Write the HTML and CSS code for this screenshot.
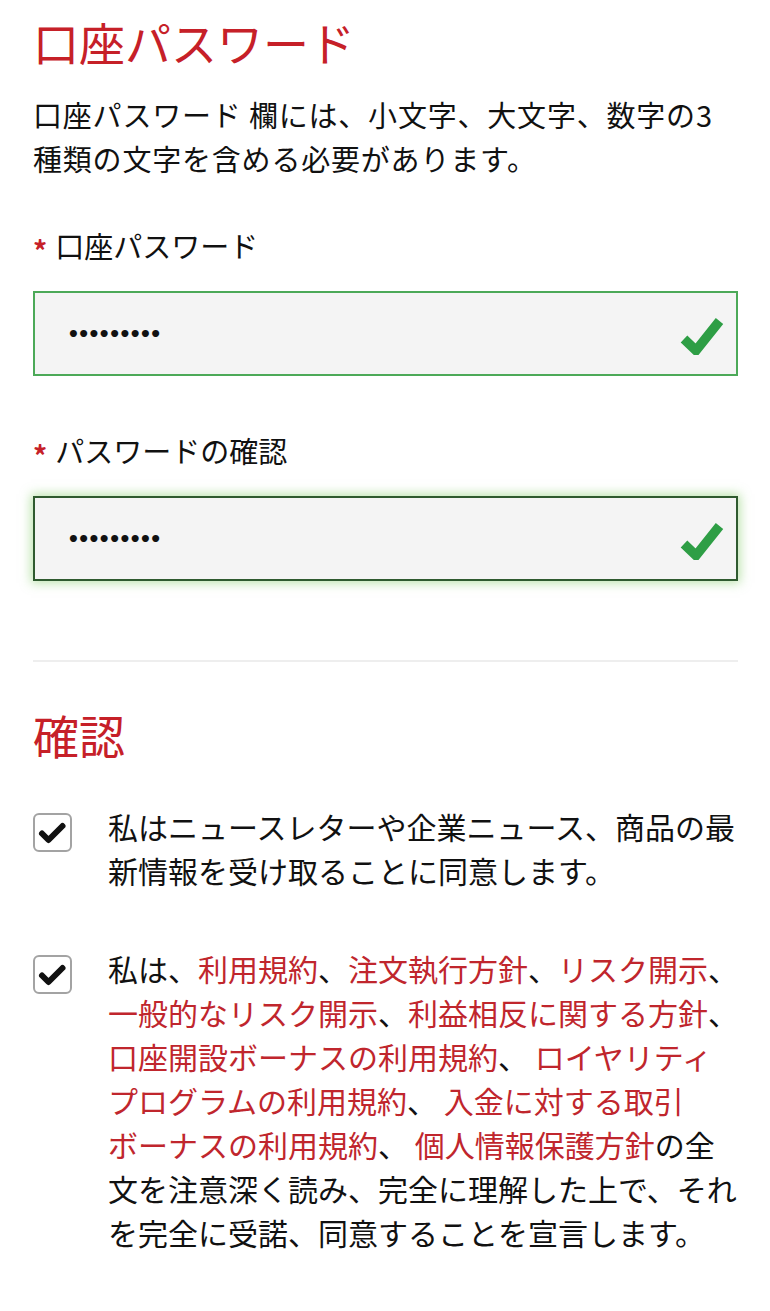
FILE: index.html
```html
<!DOCTYPE html>
<html lang="ja">
<head>
<meta charset="utf-8">
<title>口座パスワード</title>
<link rel="stylesheet" href="styles.css">
</head>
<body>
<main class="page">
  <h1 class="title">口座パスワード</h1>
  <p class="hint">口座パスワード 欄には、小文字、大文字、数字の3<br>種類の文字を含める必要があります。</p>

  <div class="field field-first">
    <div class="label"><span class="req">*</span><span>口座パスワード</span></div>
    <div class="input valid">
      <span class="mask">•••••••••</span>
      <svg class="ok" viewBox="0 0 44 40" width="44" height="40" aria-hidden="true"><polyline points="4,24 16,35.5 39.5,6" fill="none" stroke="#2e9e45" stroke-width="9.5" stroke-linejoin="miter"/></svg>
    </div>
  </div>

  <div class="field">
    <div class="label"><span class="req">*</span><span>パスワードの確認</span></div>
    <div class="input valid focused">
      <span class="mask">•••••••••</span>
      <svg class="ok" viewBox="0 0 44 40" width="44" height="40" aria-hidden="true"><polyline points="4,24 16,35.5 39.5,6" fill="none" stroke="#2e9e45" stroke-width="9.5" stroke-linejoin="miter"/></svg>
    </div>
  </div>

  <hr class="divider">

  <h2 class="title section-title">確認</h2>

  <div class="check-row first-row">
    <span class="box"><svg viewBox="0 0 39 39" width="39" height="39" aria-hidden="true"><polyline points="9,20.5 15.5,27 29.5,13" fill="none" stroke="#111" stroke-width="6" stroke-linecap="round" stroke-linejoin="round"/></svg></span>
    <p class="check-text">私はニュースレターや企業ニュース、商品の最<br>新情報を受け取ることに同意します。</p>
  </div>

  <div class="check-row second-row">
    <span class="box"><svg viewBox="0 0 39 39" width="39" height="39" aria-hidden="true"><polyline points="9,20.5 15.5,27 29.5,13" fill="none" stroke="#111" stroke-width="6" stroke-linecap="round" stroke-linejoin="round"/></svg></span>
    <p class="check-text">私は、<a class="lnk">利用規約</a>、<a class="lnk">注文執行方針</a>、<a class="lnk">リスク開示</a>、<br><a class="lnk">一般的なリスク開示</a>、<a class="lnk">利益相反に関する方針</a>、<br><a class="lnk">口座開設ボーナスの利用規約</a>、 <a class="lnk">ロイヤリティ<br>プログラムの利用規約</a>、 <a class="lnk">入金に対する取引<br>ボーナスの利用規約</a>、 <a class="lnk">個人情報保護方針</a>の全<br>文を注意深く読み、完全に理解した上で、それ<br>を完全に受諾、同意することを宣言します。</p>
  </div>
</main>
</body>
</html>
```
FILE: styles.css
```css
html, body {
  margin: 0;
  padding: 0;
  background: #ffffff;
}

body {
  font-family: "Noto Sans CJK JP", "Noto Sans", sans-serif;
  color: #111111;
}

.page {
  padding: 11px 32px 40px 33px;
}

.title {
  margin: 0;
  font-size: 46px;
  line-height: 60px;
  font-weight: 400;
  color: #c62028;
}

.hint {
  margin: 21px 0 0;
  font-size: 29px;
  line-height: 44px;
  letter-spacing: 0.8px;
  white-space: nowrap;
}

.field {
  margin-top: 54px;
}

.field-first {
  margin-top: 45px;
}

.label {
  display: flex;
  align-items: flex-start;
  height: 40px;
  font-size: 29px;
  line-height: 40px;
}

.req {
  color: #c62028;
  font-weight: 700;
  font-size: 28px;
  height: 40px;
  line-height: 50px;
  margin-right: 8px;
}

.input {
  margin-top: 26px;
  height: 85px;
  box-sizing: border-box;
  background: #f4f4f4;
  border: 2px solid #4ca958;
  display: flex;
  align-items: center;
  justify-content: space-between;
  padding: 0 12px 0 32px;
}

.input.focused {
  border-color: #2f5a2f;
  box-shadow: 0 0 10px 2px rgba(120, 200, 90, 0.5);
}

.mask {
  font-family: "DejaVu Sans", sans-serif;
  font-size: 20px;
  font-weight: 700;
  letter-spacing: -2.5px;
  color: #111;
}

.ok {
  display: block;
  margin-top: 2px;
}

.divider {
  margin: 79px 0 0;
  border: 0;
  height: 2px;
  background: #eeeeee;
}

.section-title {
  margin-top: 42px;
}

.check-row {
  display: flex;
  align-items: flex-start;
  gap: 36px;
}

.first-row {
  margin-top: 40px;
}

.second-row {
  margin-top: 54px;
}

.box {
  flex: none;
  width: 39px;
  height: 39px;
  box-sizing: border-box;
  margin-top: 9px;
  border: 2px solid #a3a3a3;
  border-radius: 6px;
  display: flex;
  align-items: center;
  justify-content: center;
}

.box svg {
  display: block;
  margin: -2px;
}

.check-text {
  margin: 0 -6px 0 0;
  font-size: 30px;
  line-height: 44px;
  white-space: nowrap;
}

.lnk {
  color: #c0262d;
  text-decoration: none;
}
```
